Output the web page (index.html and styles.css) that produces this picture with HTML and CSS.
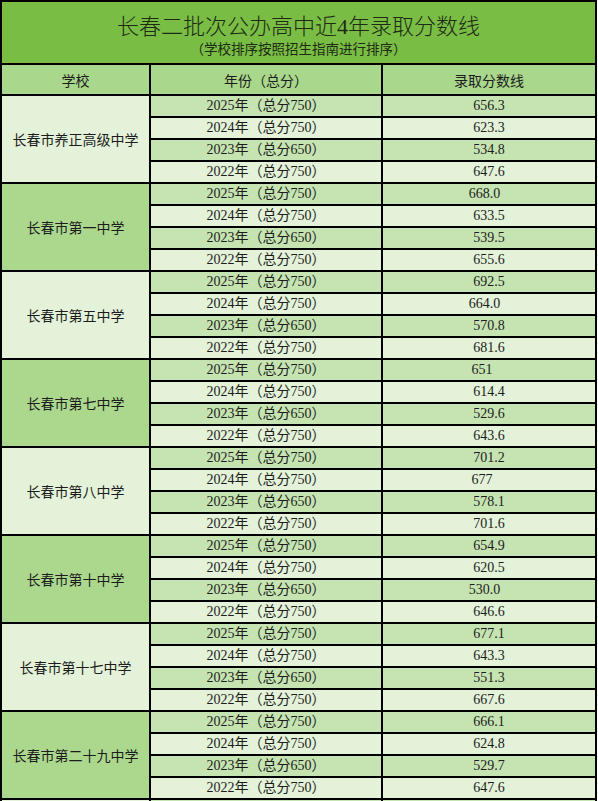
FILE: index.html
```html
<!DOCTYPE html>
<html lang="zh-CN">
<head>
<meta charset="utf-8">
<title>长春二批次公办高中近4年录取分数线</title>
<link rel="stylesheet" href="styles.css">
</head>
<body>
<div class="sheet">
  <div class="title">
    <div class="title-main">长春二批次公办高中近4年录取分数线</div>
    <div class="title-sub">（学校排序按照招生指南进行排序）</div>
  </div>
  <div class="head">学校</div>
  <div class="head">年份（总分）</div>
  <div class="head">录取分数线</div>

  <div class="school light">长春市养正高级中学</div>
  <div class="cell dark">2025年（总分750）</div><div class="cell dark">656.3</div>
  <div class="cell light">2024年（总分750）</div><div class="cell light">623.3</div>
  <div class="cell dark">2023年（总分650）</div><div class="cell dark">534.8</div>
  <div class="cell light">2022年（总分750）</div><div class="cell light">647.6</div>

  <div class="school green">长春市第一中学</div>
  <div class="cell dark">2025年（总分750）</div><div class="cell dark off-s">668.0</div>
  <div class="cell light">2024年（总分750）</div><div class="cell light">633.5</div>
  <div class="cell dark">2023年（总分650）</div><div class="cell dark">539.5</div>
  <div class="cell light">2022年（总分750）</div><div class="cell light">655.6</div>

  <div class="school light">长春市第五中学</div>
  <div class="cell dark">2025年（总分750）</div><div class="cell dark">692.5</div>
  <div class="cell light">2024年（总分750）</div><div class="cell light off-s">664.0</div>
  <div class="cell dark">2023年（总分650）</div><div class="cell dark">570.8</div>
  <div class="cell light">2022年（总分750）</div><div class="cell light">681.6</div>

  <div class="school green">长春市第七中学</div>
  <div class="cell dark">2025年（总分750）</div><div class="cell dark off-l">651</div>
  <div class="cell light">2024年（总分750）</div><div class="cell light">614.4</div>
  <div class="cell dark">2023年（总分650）</div><div class="cell dark">529.6</div>
  <div class="cell light">2022年（总分750）</div><div class="cell light">643.6</div>

  <div class="school light">长春市第八中学</div>
  <div class="cell dark">2025年（总分750）</div><div class="cell dark">701.2</div>
  <div class="cell light">2024年（总分750）</div><div class="cell light off-l">677</div>
  <div class="cell dark">2023年（总分650）</div><div class="cell dark">578.1</div>
  <div class="cell light">2022年（总分750）</div><div class="cell light">701.6</div>

  <div class="school green">长春市第十中学</div>
  <div class="cell dark">2025年（总分750）</div><div class="cell dark">654.9</div>
  <div class="cell light">2024年（总分750）</div><div class="cell light">620.5</div>
  <div class="cell dark">2023年（总分650）</div><div class="cell dark off-s">530.0</div>
  <div class="cell light">2022年（总分750）</div><div class="cell light">646.6</div>

  <div class="school light">长春市第十七中学</div>
  <div class="cell dark">2025年（总分750）</div><div class="cell dark">677.1</div>
  <div class="cell light">2024年（总分750）</div><div class="cell light">643.3</div>
  <div class="cell dark">2023年（总分650）</div><div class="cell dark">551.3</div>
  <div class="cell light">2022年（总分750）</div><div class="cell light">667.6</div>

  <div class="school green">长春市第二十九中学</div>
  <div class="cell dark">2025年（总分750）</div><div class="cell dark">666.1</div>
  <div class="cell light">2024年（总分750）</div><div class="cell light">624.8</div>
  <div class="cell dark">2023年（总分650）</div><div class="cell dark">529.7</div>
  <div class="cell light">2022年（总分750）</div><div class="cell light">647.6</div>

  <div class="cell light"></div><div class="cell dark"></div><div class="cell dark"></div>
</div>
</body>
</html>
```
FILE: styles.css
```css
html, body {
  margin: 0;
  padding: 0;
  background: #ffffff;
}

.sheet {
  box-sizing: border-box;
  width: 597px;
  display: grid;
  grid-template-columns: 147px 230px 212px;
  grid-auto-rows: 20px;
  grid-template-rows: 61px 29px;
  gap: 2px;
  padding: 2px 2px 0 2px;
  background: #000000;
  font-family: "Liberation Serif", "Noto Sans CJK SC", sans-serif;
  color: #1c1c1c;
}

.title {
  grid-column: 1 / 4;
  background: #79bd44;
  display: flex;
  flex-direction: column;
  align-items: center;
  padding-top: 12px;
}

.title-main {
  font-family: "Liberation Serif", "Noto Sans CJK SC", sans-serif;
  font-size: 22px;
  font-weight: 300;
  line-height: 25px;
  color: #1e2a14;
}

.title-sub {
  font-family: "Noto Sans CJK SC", sans-serif;
  font-size: 13.5px;
  line-height: 18px;
  color: #1e2a14;
}

.head {
  background: #a9d78b;
  font-family: "Noto Sans CJK SC", sans-serif;
  font-size: 14px;
  display: flex;
  align-items: center;
  justify-content: center;
}

.school {
  grid-row: span 4;
  font-family: "Noto Sans CJK SC", sans-serif;
  font-size: 14px;
  display: flex;
  align-items: center;
  justify-content: center;
}

.cell {
  font-size: 14px;
  line-height: 20px;
  text-align: center;
  white-space: nowrap;
}

.light {
  background: #e3f2d8;
}

.dark {
  background: #c6e4b2;
}

.green {
  background: #acd88e;
}

.off-s {
  padding-right: 9px;
}

.off-l {
  padding-right: 14px;
}
```
